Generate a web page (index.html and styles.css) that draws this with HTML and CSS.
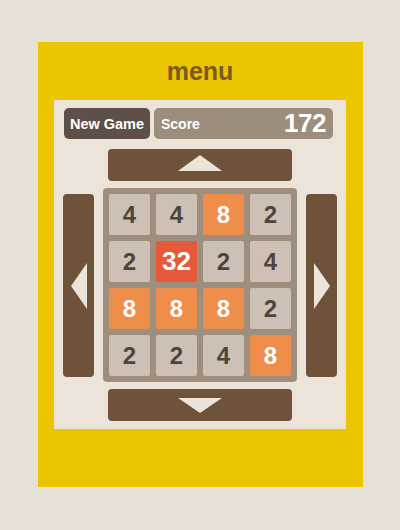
FILE: index.html
```html
<!DOCTYPE html>
<html>
<head>
<meta charset="utf-8">
<link rel="stylesheet" href="styles.css">
</head>
<body>
<div class="frame">
  <div class="title">menu</div>
  <div class="panel">
    <div class="topbar">
      <div class="newgame">New Game</div>
      <div class="score"><span class="score-label">Score</span><span class="score-value">172</span></div>
    </div>
    <div class="hbtn up">
      <svg width="44" height="16" viewBox="0 0 44 16"><polygon points="0,16 22,0 44,16" fill="#ece4d9"/></svg>
    </div>
    <div class="middle">
      <div class="vbtn">
        <svg width="16" height="46" viewBox="0 0 16 46"><polygon points="16,0 0,23 16,46" fill="#ece4d9"/></svg>
      </div>
      <div class="grid">
        <div class="tile t4">4</div>
        <div class="tile t4">4</div>
        <div class="tile t8">8</div>
        <div class="tile t2">2</div>
        <div class="tile t2">2</div>
        <div class="tile t32">32</div>
        <div class="tile t2">2</div>
        <div class="tile t4">4</div>
        <div class="tile t8">8</div>
        <div class="tile t8">8</div>
        <div class="tile t8">8</div>
        <div class="tile t2">2</div>
        <div class="tile t2">2</div>
        <div class="tile t2">2</div>
        <div class="tile t4">4</div>
        <div class="tile t8">8</div>
      </div>
      <div class="vbtn">
        <svg width="16" height="46" viewBox="0 0 16 46"><polygon points="0,0 16,23 0,46" fill="#ece4d9"/></svg>
      </div>
    </div>
    <div class="hbtn down">
      <svg width="44" height="15" viewBox="0 0 44 15"><polygon points="0,0 44,0 22,15" fill="#ece4d9"/></svg>
    </div>
  </div>
</div>
</body>
</html>
```
FILE: styles.css
```css
html, body {
  margin: 0;
  padding: 0;
}
body {
  background: #e7e0d6;
  width: 400px;
  height: 530px;
  font-family: "Liberation Sans", Arial, sans-serif;
  padding-top: 42px;
  padding-left: 38px;
  box-sizing: border-box;
}
.frame {
  width: 325px;
  height: 445px;
  background: #ebc500;
  box-sizing: border-box;
  padding: 0 17px 0 16px;
  display: flex;
  flex-direction: column;
}
.title {
  height: 58px;
  display: flex;
  align-items: center;
  justify-content: center;
  font-weight: bold;
  font-size: 25px;
  color: #7a5a1f;
  padding-top: 1px;
  box-sizing: border-box;
}
.panel {
  background: #ece4d9;
  height: 329px;
  display: flex;
  flex-direction: column;
  align-items: center;
  padding: 8px 0;
  box-sizing: border-box;
}
.topbar {
  align-self: stretch;
  display: flex;
  gap: 4px;
  padding: 0 13px 0 10px;
  height: 31px;
}
.newgame {
  width: 86px;
  background: #5e4f48;
  color: #fff;
  border-radius: 5px;
  font-weight: bold;
  font-size: 14.5px;
  display: flex;
  align-items: center;
  justify-content: center;
}
.score {
  flex: 1;
  background: #9d8d7d;
  border-radius: 5px;
  color: #fff;
  font-weight: bold;
  display: flex;
  align-items: center;
  justify-content: space-between;
  padding: 0 7px 0 7px;
}
.score-label {
  font-size: 14px;
}
.score-value {
  font-size: 26px;
  letter-spacing: -0.5px;
}
.hbtn {
  width: 184px;
  height: 32px;
  background: #6e5239;
  border-radius: 4px;
  display: flex;
  justify-content: center;
  box-sizing: border-box;
}
.hbtn svg { display: block; }
.up {
  margin-top: 10px;
  padding-top: 6px;
}
.down {
  margin-top: 7px;
  padding-top: 9px;
}
.middle {
  margin-top: 7px;
  display: flex;
  align-items: center;
  gap: 9px;
}
.vbtn {
  width: 31px;
  height: 183px;
  background: #6e5239;
  border-radius: 4px;
  display: flex;
  align-items: center;
  justify-content: center;
  margin-top: 1px;
}
.vbtn svg { display: block; }
.grid {
  width: 194px;
  height: 194px;
  box-sizing: border-box;
  padding: 6px;
  background: #9d8e7d;
  border-radius: 4px;
  display: grid;
  grid-template-columns: repeat(4, 41px);
  grid-template-rows: repeat(4, 41px);
  gap: 6px;
}
.tile {
  border-radius: 2px;
  display: flex;
  align-items: center;
  justify-content: center;
  font-weight: bold;
  font-size: 24px;
}
.t2, .t4 {
  background: #cdc1b5;
  color: #4f443c;
}
.t8 {
  background: #ef8e4b;
  color: #fff;
}
.t32 {
  background: #e8583a;
  color: #fff;
  font-size: 26px;
}
```
